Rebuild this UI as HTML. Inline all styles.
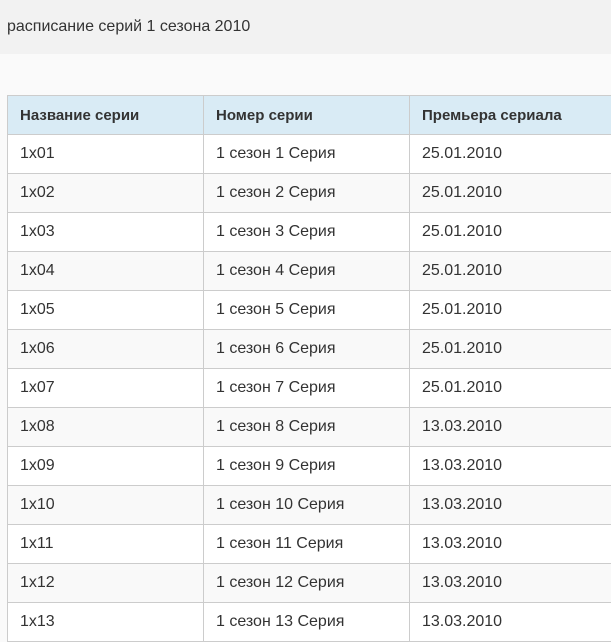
<!DOCTYPE html>
<html><head><meta charset="utf-8"><style>
body{margin:0;width:611px;height:640px;overflow:hidden;background:#fafafa;font-family:"Liberation Sans",sans-serif;color:#333;}
.top{height:54px;background:#f2f2f2;font-size:16px;line-height:54px;padding-left:7px;}
table{position:absolute;left:7px;top:95px;border-collapse:collapse;width:620px;font-size:16px;table-layout:fixed;}
td,th{border:1px solid #ccc;height:38px;padding:0 0 0 12px;text-align:left;white-space:nowrap;}
th{background:#d9ebf5;font-weight:bold;font-size:15px;}
tr:nth-child(odd) td{background:#f9f9f9}
tr:nth-child(even) td{background:#fff}
</style></head><body>
<div class="top">расписание серий 1 сезона 2010</div>
<table>
<colgroup><col style="width:196px"><col style="width:206px"><col></colgroup>
<tr><th>Название серии</th><th>Номер серии</th><th>Премьера сериала</th></tr>
<tr><td>1x01</td><td>1 сезон 1 Серия</td><td>25.01.2010</td></tr>
<tr><td>1x02</td><td>1 сезон 2 Серия</td><td>25.01.2010</td></tr>
<tr><td>1x03</td><td>1 сезон 3 Серия</td><td>25.01.2010</td></tr>
<tr><td>1x04</td><td>1 сезон 4 Серия</td><td>25.01.2010</td></tr>
<tr><td>1x05</td><td>1 сезон 5 Серия</td><td>25.01.2010</td></tr>
<tr><td>1x06</td><td>1 сезон 6 Серия</td><td>25.01.2010</td></tr>
<tr><td>1x07</td><td>1 сезон 7 Серия</td><td>25.01.2010</td></tr>
<tr><td>1x08</td><td>1 сезон 8 Серия</td><td>13.03.2010</td></tr>
<tr><td>1x09</td><td>1 сезон 9 Серия</td><td>13.03.2010</td></tr>
<tr><td>1x10</td><td>1 сезон 10 Серия</td><td>13.03.2010</td></tr>
<tr><td>1x11</td><td>1 сезон 11 Серия</td><td>13.03.2010</td></tr>
<tr><td>1x12</td><td>1 сезон 12 Серия</td><td>13.03.2010</td></tr>
<tr><td>1x13</td><td>1 сезон 13 Серия</td><td>13.03.2010</td></tr>
</table>
</body></html>
